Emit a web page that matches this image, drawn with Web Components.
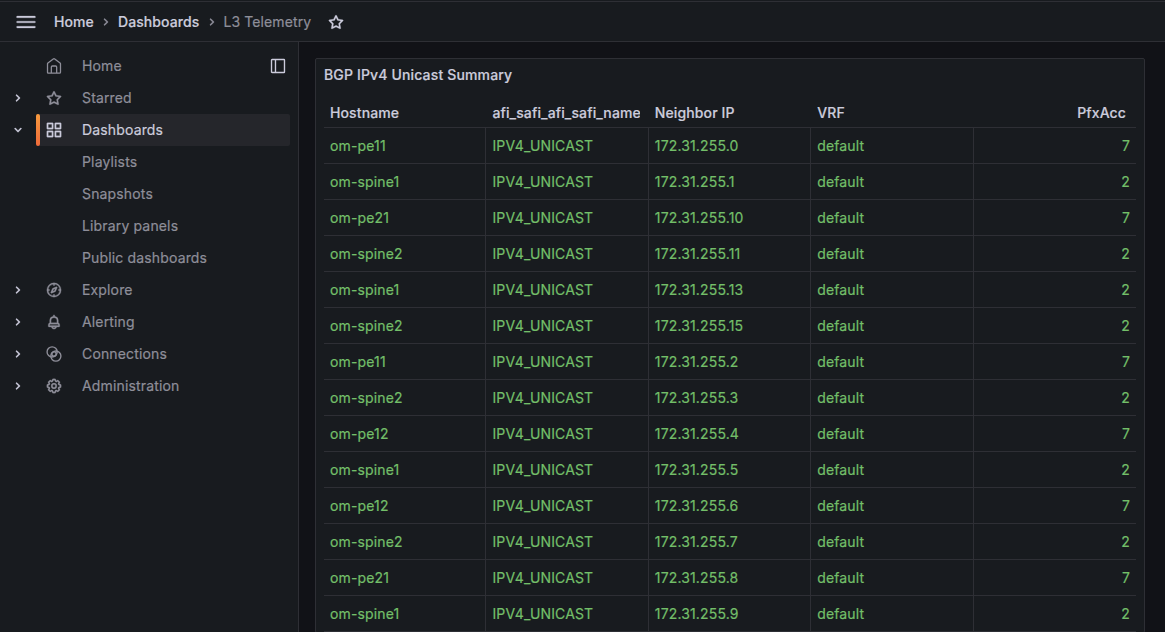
<!DOCTYPE html>
<html lang="en">
<head>
<meta charset="utf-8">
<title>L3 Telemetry</title>
<style>
html, body { height: 100%; }
body { margin: 0; background: #111217; overflow: hidden; color: rgb(204,204,220);
  font: 400 14px/22px Inter, sans-serif; letter-spacing: 0.15px; -webkit-text-stroke: 0.2px;
  --primary: #181b1f; --line: #2e2f35; --dim: rgb(142,142,153); --green: #73bf69; }
</style>
</head>
<body>
<app-shell></app-shell>
<script>
const ICONS = {
  home: '<path fill="none" stroke="currentColor" stroke-width="1.8" stroke-linejoin="round" d="M3 9Q3 8.3 3.6 7.8L11 2.2Q12 1.5 13 2.2L20.400 7.800Q21 8.300 21 9V20.500Q21 22 19.500 22H4.500Q3 22 3 20.500ZM8.300 22V13.500Q8.300 12 9.800 12H14.200Q15.700 12 15.700 13.500V22"/>',
  star: '<path d="M22,9.67A1,1,0,0,0,21.14,9l-5.69-.83L12.9,3a1,1,0,0,0-1.8,0L8.55,8.16,2.86,9a1,1,0,0,0-.81.68,1,1,0,0,0,.25,1l4.13,4-1,5.68A1,1,0,0,0,6.9,21.44L12,18.77l5.1,2.67a.93.93,0,0,0,.46.12,1,1,0,0,0,.59-.19,1,1,0,0,0,.4-1l-1-5.68,4.13-4A1,1,0,0,0,22,9.67Zm-6.15,4a1,1,0,0,0-.29.88l.72,4.2-3.76-2a1.06,1.06,0,0,0-.94,0l-3.76,2,.72-4.2a1,1,0,0,0-.29-.88l-3-3,4.21-.61a1,1,0,0,0,.76-.55L12,5.7l1.88,3.82a1,1,0,0,0,.76.55l4.21.61Z"/>',
  apps: '<path d="M10,13H3a1,1,0,0,0-1,1v7a1,1,0,0,0,1,1h7a1,1,0,0,0,1-1V14A1,1,0,0,0,10,13ZM9,20H4V15H9ZM21,2H14a1,1,0,0,0-1,1v7a1,1,0,0,0,1,1h7a1,1,0,0,0,1-1V3A1,1,0,0,0,21,2ZM20,9H15V4h5Zm1,4H14a1,1,0,0,0-1,1v7a1,1,0,0,0,1,1h7a1,1,0,0,0,1-1V14A1,1,0,0,0,21,13Zm-1,7H15V15h5ZM10,2H3A1,1,0,0,0,2,3v7a1,1,0,0,0,1,1h7a1,1,0,0,0,1-1V3A1,1,0,0,0,10,2ZM9,9H4V4H9Z"/>',
  compass: '<path d="M12,2A10,10,0,1,0,22,12,10,10,0,0,0,12,2Zm1,17.93V19a1,1,0,0,0-2,0v.93A8,8,0,0,1,4.07,13H5a1,1,0,0,0,0-2H4.07A8,8,0,0,1,11,4.07V5a1,1,0,0,0,2,0V4.07A8,8,0,0,1,19.93,11H19a1,1,0,0,0,0,2h.93A8,8,0,0,1,13,19.93ZM15.14,7.55l-5,2.12a1,1,0,0,0-.52.52l-2.12,5a1,1,0,0,0,.21,1.1,1,1,0,0,0,.7.3.93.93,0,0,0,.4-.09l5-2.12a1,1,0,0,0,.52-.52l2.12-5a1,1,0,0,0-1.31-1.31Zm-2.49,5.1-2.28,1,1-2.28,2.28-1Z"/>',
  bell: '<path d="M18,13.18V10a6,6,0,0,0-5-5.91V3a1,1,0,0,0-2,0V4.09A6,6,0,0,0,6,10v3.18A3,3,0,0,0,4,16v2a1,1,0,0,0,1,1H8.14a4,4,0,0,0,7.72,0H19a1,1,0,0,0,1-1V16A3,3,0,0,0,18,13.18ZM8,10a4,4,0,0,1,8,0v3H8Zm4,10a2,2,0,0,1-1.72-1h3.44A2,2,0,0,1,12,20Zm6-3H6V16a1,1,0,0,1,1-1H17a1,1,0,0,1,1,1Z"/>',
  link: '<g fill="none" stroke="currentColor" stroke-width="1.900"><circle cx="9.400" cy="9.100" r="7"/><circle cx="14.600" cy="14.900" r="7"/><circle cx="12" cy="12" r="3"/></g>',
  cog: '<path d="M21.32,9.55l-1.89-.63.89-1.78A1,1,0,0,0,20.13,6L18,3.87a1,1,0,0,0-1.15-.19l-1.78.89-.63-1.89A1,1,0,0,0,13.5,2h-3a1,1,0,0,0-.95.68L8.92,4.57,7.14,3.68A1,1,0,0,0,6,3.87L3.87,6a1,1,0,0,0-.19,1.15l.89,1.78-1.89.63A1,1,0,0,0,2,10.5v3a1,1,0,0,0,.68.95l1.89.63-.89,1.78A1,1,0,0,0,3.87,18L6,20.13a1,1,0,0,0,1.15.19l1.78-.89.63,1.89a1,1,0,0,0,.95.68h3a1,1,0,0,0,.95-.68l.63-1.89,1.78.89A1,1,0,0,0,18,20.13L20.13,18a1,1,0,0,0,.19-1.15l-.89-1.78,1.89-.63A1,1,0,0,0,22,13.5v-3A1,1,0,0,0,21.32,9.55ZM20,12.78l-1.2.4A2,2,0,0,0,17.64,16l.57,1.14-1.1,1.1L16,17.64a2,2,0,0,0-2.79,1.16l-.4,1.2H11.22l-.4-1.2A2,2,0,0,0,8,17.64l-1.14.57-1.1-1.1L6.36,16A2,2,0,0,0,5.2,13.18L4,12.78V11.22l1.2-.4A2,2,0,0,0,6.36,8L5.79,6.89l1.1-1.1L8,6.36A2,2,0,0,0,10.82,5.2l.4-1.2h1.56l.4,1.2A2,2,0,0,0,16,6.36l1.14-.57,1.1,1.1L17.64,8a2,2,0,0,0,1.16,2.79l1.2.4ZM12,8a4,4,0,1,0,4,4A4,4,0,0,0,12,8Zm0,6a2,2,0,1,1,2-2A2,2,0,0,1,12,14Z"/>',
  right: '<path d="M14.83,11.29,10.59,7.05a1,1,0,0,0-1.42,0,1,1,0,0,0,0,1.41L12.71,12,9.17,15.54a1,1,0,0,0,0,1.41,1,1,0,0,0,.71.29,1,1,0,0,0,.71-.29l4.24-4.24A1,1,0,0,0,14.83,11.29Z"/>',
  down: '<path d="M17,9.17a1,1,0,0,0-1.41,0L12,12.71,8.46,9.17a1,1,0,0,0-1.41,0,1,1,0,0,0,0,1.42l4.24,4.24a1,1,0,0,0,1.42,0L17,10.59A1,1,0,0,0,17,9.17Z"/>',
  menu: '<path d="M1.600,4.9H22.400a1,1,0,0,1,0,2H1.600a1,1,0,0,1,0-2ZM1.600,11H22.400a1,1,0,0,1,0,2H1.600a1,1,0,0,1,0-2ZM1.600,17.1H22.400a1,1,0,0,1,0,2H1.600a1,1,0,0,1,0-2Z"/>',
  dock: '<g fill="none" stroke="currentColor" stroke-width="1.900"><rect x="3" y="3" width="18" height="18" rx=".8"/><path d="M8.500 3V21"/></g>'
};
const PLAIN = ['menu', 'right', 'down'];

class BaseElement extends HTMLElement {
  connectedCallback() {
    if (!this.shadowRoot) this.attachShadow({ mode: 'open' }).innerHTML = this.render();
  }
}

customElements.define('ui-icon', class extends BaseElement {
  render() {
    const s = this.getAttribute('size') || 16, name = this.getAttribute('name');
    const box = PLAIN.includes(name) ? '0 0 24 24' : '.9 .9 22.2 22.2';
    return `<style>:host{display:block;flex:none;width:${s}px;height:${s}px}svg{display:block}</style>
    <svg width="${s}" height="${s}" viewBox="${box}" fill="currentColor" stroke="currentColor" stroke-width=".35">${ICONS[name]}</svg>`;
  }
});

customElements.define('top-bar', class extends BaseElement {
  render() {
    return `<style>
    :host{display:flex;align-items:center;box-sizing:border-box;height:42px;padding:2px 16px 0;
      background:linear-gradient(var(--line),var(--line)) 0 1px/100% 1px no-repeat var(--primary);border-bottom:1px solid var(--line)}
    nav{display:flex;align-items:center;margin-left:18px;font-weight:500;letter-spacing:.1px}
    nav ui-icon{margin:1px 4px 0;color:var(--dim)}
    .here{color:var(--dim);font-weight:400}
    .star{margin-left:17px}
    </style>
    <ui-icon name="menu" size="20"></ui-icon>
    <nav><span>Home</span><ui-icon name="right"></ui-icon><span>Dashboards</span><ui-icon name="right"></ui-icon><span class="here">L3 Telemetry</span></nav>
    <ui-icon class="star" name="star"></ui-icon>`;
  }
});

customElements.define('nav-item', class extends BaseElement {
  render() {
    const icon = this.getAttribute('icon'), arrow = this.getAttribute('arrow');
    return `<style>
    :host{display:grid;grid-template-columns:36px 1fr;height:32px;color:var(--dim)}
    :host([active]){color:rgb(204,204,220)}
    .arrow{display:flex;align-items:center;padding-left:10px;color:rgb(204,204,220)}
    .link{display:flex;align-items:center;position:relative;padding-left:10px}
    .icon{width:16px;margin-right:20px}
    .label{flex:1}
    :host([active]) .link{background:#25262b;border-radius:2px}
    :host([active]) .link::before{content:"";position:absolute;left:0;top:0;bottom:0;width:4px;border-radius:2px;background:linear-gradient(#f79a3e,#ee6a3a)}
    </style>
    <div class="arrow">${arrow ? `<ui-icon name="${arrow}"></ui-icon>` : ''}</div>
    <div class="link"><div class="icon">${icon ? `<ui-icon name="${icon}"></ui-icon>` : ''}</div><span class="label"><slot></slot></span><slot name="end"></slot></div>`;
  }
});

customElements.define('side-nav', class extends BaseElement {
  render() {
    return `<style>
    :host{display:block;box-sizing:border-box;width:299px;padding:8px 8px 0 0;background:var(--primary);border-right:1px solid var(--line)}
    [slot=end]{margin-right:4px;color:rgb(204,204,220)}
    </style>
    <nav-item icon="home">Home<ui-icon slot="end" name="dock"></ui-icon></nav-item>
    <nav-item icon="star" arrow="right">Starred</nav-item>
    <nav-item icon="apps" arrow="down" active>Dashboards</nav-item>
    <nav-item>Playlists</nav-item>
    <nav-item>Snapshots</nav-item>
    <nav-item>Library panels</nav-item>
    <nav-item>Public dashboards</nav-item>
    <nav-item icon="compass" arrow="right">Explore</nav-item>
    <nav-item icon="bell" arrow="right">Alerting</nav-item>
    <nav-item icon="link" arrow="right">Connections</nav-item>
    <nav-item icon="cog" arrow="right">Administration</nav-item>`;
  }
});

customElements.define('dash-panel', class extends BaseElement {
  render() {
    return `<style>
    :host{display:block;box-sizing:border-box;padding:0 8px;background:var(--primary);border:1px solid var(--line);border-radius:2px}
    h2{margin:0;height:32px;font:500 14px/32px Inter,sans-serif}
    </style><h2>${this.getAttribute('heading')}</h2><slot></slot>`;
  }
});

customElements.define('bgp-table', class extends BaseElement {
  render() {
    const rows = [['pe11', 0, 7], ['spine1', 1, 2], ['pe21', 10, 7], ['spine2', 11, 2], ['spine1', 13, 2],
      ['spine2', 15, 2], ['pe11', 2, 7], ['spine2', 3, 2], ['pe12', 4, 7], ['spine1', 5, 2],
      ['pe12', 6, 7], ['spine2', 7, 2], ['pe21', 8, 7], ['spine1', 9, 2]];
    const cells = a => a.map(t => `<div><span>${t}</span></div>`).join('');
    return `<style>
    :host{display:block}
    .row{display:grid;grid-template-columns:repeat(5,1fr);box-sizing:border-box;height:36px;border-bottom:1px solid var(--line);color:var(--green)}
    .row div{box-sizing:border-box;padding:0 6px;line-height:36px;border-right:1px solid var(--line);white-space:nowrap;min-width:0}
    .row div:last-child{border-right:0;text-align:right}
    .row.head{color:inherit;font-weight:500;height:37px}
    .head div{border-color:transparent;padding-right:8px;line-height:44px}
    .head span{display:block;overflow:hidden;height:36px;letter-spacing:.12px}
    .head div:last-child{padding-right:10px}
    </style>
    <div class="row head">${cells(['Hostname', 'afi_safi_afi_safi_name', 'Neighbor IP', 'VRF', 'PfxAcc'])}</div>
    ${rows.map(([h, ip, n]) => `<div class="row">${cells(['om-' + h, 'IPV4_UNICAST', '172.31.255.' + ip, 'default', n])}</div>`).join('')}`;
  }
});

customElements.define('app-shell', class extends BaseElement {
  render() {
    return `<style>
    :host{display:grid;grid-template:42px 1fr / 299px 1fr;height:100vh;overflow:hidden}
    top-bar{grid-column:1/-1}
    main{padding:16px 20px 0 16px;min-height:0;overflow:hidden}
    </style>
    <top-bar></top-bar><side-nav></side-nav>
    <main><dash-panel heading="BGP IPv4 Unicast Summary"><bgp-table></bgp-table></dash-panel></main>`;
  }
});
</script>
</body>
</html>
